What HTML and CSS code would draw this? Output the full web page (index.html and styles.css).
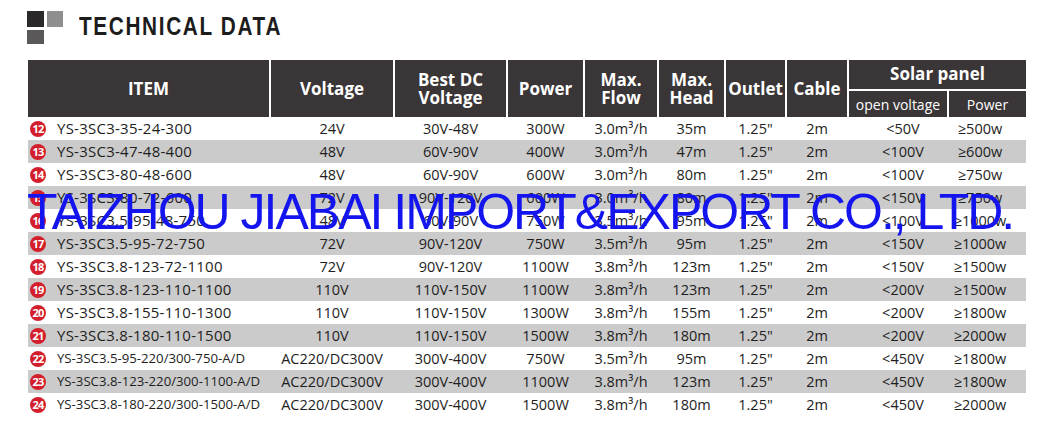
FILE: index.html
```html
<!DOCTYPE html>
<html>
<head>
<meta charset="utf-8">
<link rel="stylesheet" href="styles.css">
</head>
<body>
<div class="page">
  <div class="title">
    <div class="logo">
      <span class="sq sq-dark"></span>
      <span class="sq sq-light"></span>
      <span class="sq sq-mid"></span>
    </div>
    <h1 class="title-text">TECHNICAL DATA</h1>
  </div>
  <table class="spec">
    <colgroup>
      <col style="width:242px"><col style="width:124px"><col style="width:113px"><col style="width:77px"><col style="width:74px"><col style="width:67px"><col style="width:61px"><col style="width:62px"><col style="width:100px"><col style="width:78px">
    </colgroup>
    <thead>
      <tr class="h1">
        <th rowspan="2" class="first">ITEM</th>
        <th rowspan="2">Voltage</th>
        <th rowspan="2">Best DC<br>Voltage</th>
        <th rowspan="2">Power</th>
        <th rowspan="2">Max.<br>Flow</th>
        <th rowspan="2">Max.<br>Head</th>
        <th rowspan="2">Outlet</th>
        <th rowspan="2">Cable</th>
        <th colspan="2" class="group">Solar panel</th>
      </tr>
      <tr class="h2">
        <th class="sub">open voltage</th>
        <th class="sub">Power</th>
      </tr>
    </thead>
    <tbody>
      <tr><td class="item"><div class="cell"><span class="badge">12</span><span class="name">YS-3SC3-35-24-300</span></div></td><td>24V</td><td>30V-48V</td><td>300W</td><td>3.0m³/h</td><td>35m</td><td>1.25"</td><td>2m</td><td class="ov">&lt;50V</td><td class="pw">≥500w</td></tr>
      <tr class="alt"><td class="item"><div class="cell"><span class="badge">13</span><span class="name">YS-3SC3-47-48-400</span></div></td><td>48V</td><td>60V-90V</td><td>400W</td><td>3.0m³/h</td><td>47m</td><td>1.25"</td><td>2m</td><td class="ov">&lt;100V</td><td class="pw">≥600w</td></tr>
      <tr><td class="item"><div class="cell"><span class="badge">14</span><span class="name">YS-3SC3-80-48-600</span></div></td><td>48V</td><td>60V-90V</td><td>600W</td><td>3.0m³/h</td><td>80m</td><td>1.25"</td><td>2m</td><td class="ov">&lt;100V</td><td class="pw">≥750w</td></tr>
      <tr class="alt"><td class="item"><div class="cell"><span class="badge">15</span><span class="name">YS-3SC3-80-72-600</span></div></td><td>72V</td><td>90V-120V</td><td>600W</td><td>3.0m³/h</td><td>80m</td><td>1.25"</td><td>2m</td><td class="ov">&lt;150V</td><td class="pw">≥750w</td></tr>
      <tr><td class="item"><div class="cell"><span class="badge">16</span><span class="name">YS-3SC3.5-95-48-750</span></div></td><td>48V</td><td>60V-90V</td><td>750W</td><td>3.5m³/h</td><td>95m</td><td>1.25"</td><td>2m</td><td class="ov">&lt;100V</td><td class="pw">≥1000w</td></tr>
      <tr class="alt"><td class="item"><div class="cell"><span class="badge">17</span><span class="name">YS-3SC3.5-95-72-750</span></div></td><td>72V</td><td>90V-120V</td><td>750W</td><td>3.5m³/h</td><td>95m</td><td>1.25"</td><td>2m</td><td class="ov">&lt;150V</td><td class="pw">≥1000w</td></tr>
      <tr><td class="item"><div class="cell"><span class="badge">18</span><span class="name">YS-3SC3.8-123-72-1100</span></div></td><td>72V</td><td>90V-120V</td><td>1100W</td><td>3.8m³/h</td><td>123m</td><td>1.25"</td><td>2m</td><td class="ov">&lt;150V</td><td class="pw">≥1500w</td></tr>
      <tr class="alt"><td class="item"><div class="cell"><span class="badge">19</span><span class="name">YS-3SC3.8-123-110-1100</span></div></td><td>110V</td><td>110V-150V</td><td>1100W</td><td>3.8m³/h</td><td>123m</td><td>1.25"</td><td>2m</td><td class="ov">&lt;200V</td><td class="pw">≥1500w</td></tr>
      <tr><td class="item"><div class="cell"><span class="badge">20</span><span class="name">YS-3SC3.8-155-110-1300</span></div></td><td>110V</td><td>110V-150V</td><td>1300W</td><td>3.8m³/h</td><td>155m</td><td>1.25"</td><td>2m</td><td class="ov">&lt;200V</td><td class="pw">≥1800w</td></tr>
      <tr class="alt"><td class="item"><div class="cell"><span class="badge">21</span><span class="name">YS-3SC3.8-180-110-1500</span></div></td><td>110V</td><td>110V-150V</td><td>1500W</td><td>3.8m³/h</td><td>180m</td><td>1.25"</td><td>2m</td><td class="ov">&lt;200V</td><td class="pw">≥2000w</td></tr>
      <tr><td class="item"><div class="cell"><span class="badge">22</span><span class="name small">YS-3SC3.5-95-220/300-750-A/D</span></div></td><td>AC220/DC300V</td><td>300V-400V</td><td>750W</td><td>3.5m³/h</td><td>95m</td><td>1.25"</td><td>2m</td><td class="ov">&lt;450V</td><td class="pw">≥1800w</td></tr>
      <tr class="alt"><td class="item"><div class="cell"><span class="badge">23</span><span class="name small">YS-3SC3.8-123-220/300-1100-A/D</span></div></td><td>AC220/DC300V</td><td>300V-400V</td><td>1100W</td><td>3.8m³/h</td><td>123m</td><td>1.25"</td><td>2m</td><td class="ov">&lt;450V</td><td class="pw">≥1800w</td></tr>
      <tr><td class="item"><div class="cell"><span class="badge">24</span><span class="name small">YS-3SC3.8-180-220/300-1500-A/D</span></div></td><td>AC220/DC300V</td><td>300V-400V</td><td>1500W</td><td>3.8m³/h</td><td>180m</td><td>1.25"</td><td>2m</td><td class="ov">&lt;450V</td><td class="pw">≥2000w</td></tr>
    </tbody>
  </table>
  <div class="watermark">TAIZHOU JIABAI IMPORT&amp;EXPORT CO., LTD.</div>
</div>
</body>
</html>
```
FILE: styles.css
```css
html, body {
  margin: 0;
  padding: 0;
  background: #ffffff;
}
.page {
  position: relative;
  width: 1059px;
  height: 427px;
  padding: 11px 0 0 28px;
  box-sizing: border-box;
  font-family: "Open Sans", "Liberation Sans", sans-serif;
  color: #1e1e1e;
}
.title {
  display: flex;
  align-items: flex-start;
  height: 49px;
  margin-left: -1px;
}
.logo {
  display: grid;
  grid-template-columns: 17px 16px;
  grid-template-rows: 16px 14px;
  column-gap: 3px;
  row-gap: 3px;
  width: 36px;
}
.sq { display: block; }
.sq-dark { background: #2b2829; }
.sq-light { background: #8e8e8e; }
.sq-mid { background: #5a5859; }
.title-text {
  margin: 3px 0 0 16px;
  font-family: "Liberation Sans", Arial, sans-serif;
  font-weight: bold;
  font-size: 25px;
  line-height: 25px;
  letter-spacing: 2px;
  color: #1c1c1c;
  transform: scaleX(0.83);
  transform-origin: left center;
  white-space: nowrap;
}
.spec {
  border-collapse: collapse;
  table-layout: fixed;
  width: 998px;
}
.spec th {
  background: #3a3536;
  color: #ffffff;
  font-weight: bold;
  font-size: 17px;
  line-height: 18px;
  padding: 0;
  border-left: 2px solid #ffffff;
  text-align: center;
  vertical-align: middle;
}
.spec th.first { border-left: none; }
.spec tr.h1 th { height: 27px; }
.spec tr.h1 th[rowspan] { height: 54px; }
.spec th.group {
  border-bottom: 2px solid #ffffff;
  height: 25px;
  padding-bottom: 2px;
}
.spec th.sub {
  font-weight: normal;
  font-size: 14px;
  height: 25px;
  padding-top: 1px;
}
.spec td {
  height: 23px;
  padding: 0;
  font-size: 14.5px;
  line-height: 23px;
  text-align: center;
  white-space: nowrap;
}
.spec td.ov { padding-left: 10px; }
.spec td.pw { padding-right: 14px; }
.spec tbody tr.alt td { background: #cbcbcb; }
.spec td.item {
  text-align: left;
  padding-left: 2px;
}
.cell {
  display: flex;
  align-items: center;
  height: 23px;
}
.name {
  font-size: 15px;
  letter-spacing: 0.25px;
}
.name.small {
  font-size: 13.2px;
  letter-spacing: 0;
}
.badge {
  flex: none;
  width: 16px;
  height: 16px;
  border-radius: 50%;
  background: #d31f2c;
  color: #ffffff;
  font-size: 11px;
  font-weight: bold;
  line-height: 16px;
  text-align: center;
  letter-spacing: -0.8px;
  margin-right: 11px;
}
.watermark {
  position: absolute;
  left: 27px;
  top: 187px;
  font-family: "Liberation Sans", Arial, sans-serif;
  font-size: 50px;
  line-height: 50px;
  letter-spacing: -2px;
  color: #1414ee;
  white-space: nowrap;
}
```
